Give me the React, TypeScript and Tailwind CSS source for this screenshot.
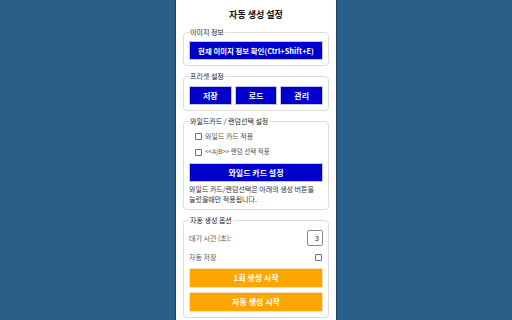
import React from "react";

const Box = () => (
  <span className="inline-block w-[7px] h-[7px] border border-[#6b6b6b] rounded-[1px] bg-white shrink-0" />
);

const Field = ({ title, children, className = "" }: { title: string; children: React.ReactNode; className?: string }) => (
  <fieldset className={`border border-[#dcdcdc] rounded-[4px] px-[5px] pb-[5px] ${className}`}>
    <legend className="px-[1px] text-[7px] leading-[10px] text-[#222]">{title}</legend>
    {children}
  </fieldset>
);

const blueBtn =
  "h-[19px] bg-[#0000cd] border border-[#c4c4ee] text-white text-[8px] font-bold flex items-center justify-center leading-none";
const orangeBtn =
  "h-[20px] bg-[#ffa500] border border-[#f3e2c0] text-white text-[8px] font-bold flex items-center justify-center leading-none";

export default function App() {
  return (
    <div className="w-[512px] h-[320px] bg-[#2a5f8a] overflow-hidden flex justify-center [font-family:'Noto_Sans_CJK_KR','Noto_Sans',sans-serif]">
      <div className="w-[162px] h-[330px] bg-white border-x border-[#1d4566] px-[7px] pt-[8px] flex flex-col">
        <div className="text-center text-[9px] font-bold leading-[14px] text-[#111] mb-[5px]">자동 생성 설정</div>

        <Field title="이미지 정보">
          <div className={`${blueBtn} mt-[4px] !text-[7.4px]`}>현재 이미지 정보 확인(Ctrl+Shift+E)</div>
        </Field>

        <Field title="프리셋 설정" className="mt-[5px]">
          <div className="mt-[5px] grid grid-cols-3 gap-[3px]">
            <div className={blueBtn}>저장</div>
            <div className={blueBtn}>로드</div>
            <div className={blueBtn}>관리</div>
          </div>
        </Field>

        <Field title="와일드카드 / 랜덤선택 설정" className="mt-[5px] pb-[4px]">
          <div className="mt-[2px] h-[16px] flex items-center gap-[3px] pl-[6px] text-[7px] text-[#555]">
            <Box />
            <span>와일드 카드 적용</span>
          </div>
          <div className="h-[16px] flex items-center gap-[3px] pl-[6px] text-[7px] text-[#555]">
            <Box />
            <span className="text-[6.5px]">&lt;&lt;A|B&gt;&gt; 랜덤 선택 적용</span>
          </div>
          <div className={`${blueBtn} mt-[3px]`}>와일드 카드 설정</div>
          <div className="mt-[2px] pr-[6px] text-[7px] leading-[10px] text-[#333]">
            와일드 카드/랜덤선택은 아래의 생성 버튼을 눌렀을때만 적용됩니다.
          </div>
        </Field>

        <Field title="자동 생성 옵션" className="mt-[5px]">
          <div className="mt-[5px] h-[16px] flex items-center justify-between text-[7px] text-[#555]">
            <span>대기 시간 (초):</span>
            <span className="w-[16px] h-[16px] border border-[#8a8a8a] rounded-[2px] flex items-center justify-end pr-[3px] text-[7px] text-[#111]">3</span>
          </div>
          <div className="mt-[3px] h-[16px] flex items-center justify-between text-[7px] text-[#555]">
            <span>자동 저장</span>
            <span className="mr-[1px] flex"><Box /></span>
          </div>
          <div className={`${orangeBtn} mt-[3px]`}>1회 생성 시작</div>
          <div className={`${orangeBtn} mt-[4px]`}>자동 생성 시작</div>
        </Field>
      </div>
    </div>
  );
}
